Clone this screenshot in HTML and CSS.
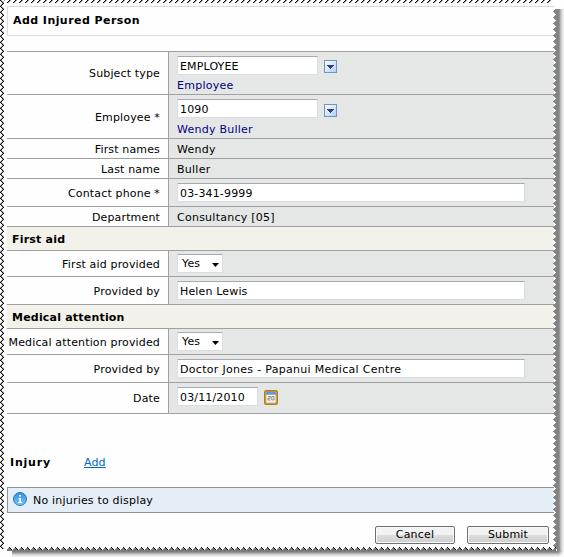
FILE: index.html
```html
<!DOCTYPE html>
<html lang="en">
<head>
<meta charset="utf-8">
<title>Add Injured Person</title>
<link rel="stylesheet" href="styles.css">
</head>
<body>
<main class="page">
  <header class="title"><h1>Add Injured Person</h1></header>
  <section class="form">
    <div class="row h-type"><label class="label">Subject type</label><div class="value stack">
      <div class="line"><input class="field code" value="EMPLOYEE"><svg class="drop" viewBox="0 0 13 13"><use href="#drop"/></svg></div><span class="hint">Employee</span></div></div>
    <div class="row h-emp"><label class="label">Employee *</label><div class="value stack">
      <div class="line"><input class="field code" value="1090"><svg class="drop low" viewBox="0 0 13 13"><use href="#drop"/></svg></div><span class="hint lower">Wendy Buller</span></div></div>
    <div class="row h-text"><span class="label">First names</span><div class="value">Wendy</div></div>
    <div class="row h-text"><span class="label">Last name</span><div class="value">Buller</div></div>
    <div class="row h-input"><label class="label">Contact phone *</label><div class="value"><input class="field wide" value="03-341-9999"></div></div>
    <div class="row h-text"><span class="label">Department</span><div class="value">Consultancy [05]</div></div>
    <h2 class="group">First aid</h2>
    <div class="row h-select"><label class="label">First aid provided</label><div class="value"><div class="field select">Yes<svg viewBox="0 0 7 4" class="caret"><path d="M0 0h7L3.5 4z"/></svg></div></div></div>
    <div class="row h-input"><label class="label">Provided by</label><div class="value"><input class="field wide" value="Helen Lewis"></div></div>
    <h2 class="group">Medical attention</h2>
    <div class="row h-select"><label class="label">Medical attention provided</label><div class="value"><div class="field select">Yes<svg viewBox="0 0 7 4" class="caret"><path d="M0 0h7L3.5 4z"/></svg></div></div></div>
    <div class="row h-input"><label class="label">Provided by</label><div class="value"><input class="field wide spaced" value="Doctor Jones - Papanui Medical Centre"></div></div>
    <div class="row h-date"><label class="label">Date</label><div class="value"><input class="field date" value="03/11/2010">
      <svg class="calendar" viewBox="0 0 14 15"><rect x=".75" y=".75" width="12.5" height="13.5" rx="1.5" fill="#f1c65b" stroke="#b57a10" stroke-width="1.5"/><rect x="2" y="2" width="10" height="11" rx="1" fill="#f6f4ec" stroke="#aaa08a" stroke-width=".7"/><path d="M3 1.8h8l1 2.7H2z" fill="#2d72c8"/><path d="M3.5 3h7" stroke="#b9dcff" stroke-width=".8"/><path d="M4 6.5h2.3v1.7H4v1.8h2.5M7.8 6.5H10V10H7.8z" fill="none" stroke="#777" stroke-width=".8"/></svg></div></div>
  </section>
  <section class="injury"><h2>Injury</h2><a href="#">Add</a></section>
  <div class="notice">
    <svg class="info" viewBox="0 0 14 14"><defs><linearGradient id="blue" x2="0" y2="1"><stop stop-color="#2f8ee0"/><stop offset="1" stop-color="#7cc8fa"/></linearGradient></defs><circle cx="7" cy="7" r="6.5" fill="url(#blue)" stroke="#2878c4"/><path d="M6 3h2v1.6H6zM5.4 6H8v4h1v1H5.2v-1h1V7h-.8z" fill="#fff"/></svg>
    <span>No injuries to display</span>
  </div>
  <footer class="actions"><button class="cancel">Cancel</button><button class="submit">Submit</button></footer>
</main>
<svg class="torn" width="564" height="557" shape-rendering="crispEdges">
  <defs>
    <symbol id="drop" viewBox="0 0 13 13"><linearGradient id="dg" x2="1" y2="1"><stop stop-color="#fff"/><stop offset="1" stop-color="#a9d0f8"/></linearGradient><rect x=".5" y=".5" width="12" height="12" fill="url(#dg)" stroke="#7193bd"/><path d="M3 5h7v1H9v1H8v1H7v1H6V8H5V7H4V6H3z" fill="#393b86"/></symbol>
    <pattern id="left" width="4" height="6" patternUnits="userSpaceOnUse"><path d="M0 0h1v1H0zM1 1h1v1H1zM2 2h1v1H2zM3 3h1v1H3zM2 4h1v1H2zM1 5h1v1H1z"/><path d="M1 0h1v1H1zM2 1h1v1H2zM3 2h1v1H3zM2 3h1v1H2zM1 4h1v1H1zM0 5h1v1H0z" fill="#000" opacity=".35"/></pattern>
    <pattern id="top" width="6" height="3" patternUnits="userSpaceOnUse"><path d="M3 0h1v1H3zM2 1h1v1H2zM1 2h1v1H1z"/><path d="M4 0h1v1H4zM3 1h1v1H3zM2 2h1v1H2z" opacity=".4"/></pattern>
    <pattern id="right" x="553" y="9" width="4" height="6" patternUnits="userSpaceOnUse"><path d="M0 2h4v1H0zM1 1h3v3H1zM2 0h2v5H2zM3 0h1v6H3z" fill="#858585"/></pattern>
    <pattern id="bottom" x="3" y="547" width="6" height="4" patternUnits="userSpaceOnUse"><path d="M0 0h1v1H0zM0 1h2v1H0zM5 1h1v1H5zM0 2h3v1H0zM4 2h2v1H4zM0 3h6v1H0z" fill="#777"/><path d="M0 0h1v1h1v1h1v1H2V2H1V1H0z"/></pattern>
    <linearGradient id="sr"><stop stop-color="#7d7d7d"/><stop offset=".3" stop-color="#898989"/><stop offset=".6" stop-color="#cecece"/><stop offset="1" stop-color="#f6f6f6"/></linearGradient>
    <linearGradient id="sb" x2="0" y2="1"><stop stop-color="#777"/><stop offset=".3" stop-color="#999"/><stop offset=".6" stop-color="#d5d5d5"/><stop offset="1" stop-color="#f8f8f8"/></linearGradient>
    <radialGradient id="sc" cx="0" cy="0" r="1"><stop stop-color="#777"/><stop offset=".4" stop-color="#999"/><stop offset=".7" stop-color="#d5d5d5"/><stop offset="1" stop-color="#f8f8f8"/></radialGradient>
  </defs>
  <rect width="4" height="549" fill="url(#left)"/>
  <rect x="4" width="549" height="3" fill="url(#top)"/>
  <rect x="553" y="9" width="4" height="540" fill="url(#right)"/>
  <rect x="557" y="9" width="7" height="541" fill="url(#sr)"/>
  <rect x="7" y="547" width="549" height="4" fill="url(#bottom)"/>
  <rect x="12" y="551" width="545" height="6" fill="url(#sb)"/>
  <rect x="557" y="550" width="7" height="7" fill="url(#sc)"/>
</svg>
</body>
</html>
```
FILE: styles.css
```css
* { box-sizing: border-box; }
body {
  margin: 0;
  width: 564px;
  height: 557px;
  overflow: hidden;
  background: #fefefe;
  color: #000;
  font: 11px/14px "DejaVu Sans", Verdana, sans-serif;
  letter-spacing: .15px;
}
h1, h2 { margin: 0; font-size: 11px; line-height: 14px; letter-spacing: .2px; }
h1 { letter-spacing: .44px; }
.page { padding: 6px 10px 0 7px; }
.title {
  height: 30px;
  padding: 7px 5px;
  border: 1px solid #dcdcdc;
  border-right: 0;
}
.form { margin-top: 15px; border-top: 1px solid #a19f9f; }
.row { display: grid; grid-template-columns: 161px 1fr; border-bottom: 1px solid #a19f9f; }
.label {
  display: flex;
  align-items: center;
  justify-content: flex-end;
  padding: 2px 8px 0 0;
  white-space: nowrap;
}
.value {
  display: flex;
  align-items: center;
  padding: 0 8px;
  background: #e5e7e6;
  border-left: 1px solid #a19f9f;
  letter-spacing: .25px;
}
.stack { flex-direction: column; align-items: flex-start; padding-top: 4px; gap: 4px; }
.line { display: flex; align-items: flex-start; gap: 6px; height: 19px; }
.hint { color: #000080; }
.lower { padding-top: 1px; }
.h-type { height: 43px; }
.h-emp { height: 44px; }
.h-text { height: 20px; }
.h-text .value { padding-top: 2px; }
.h-input { height: 28px; }
.h-input .value { align-items: flex-start; padding-top: 4px; }
.h-select { height: 26px; }
.h-date { height: 31px; }
.h-date .value { align-items: flex-start; padding-top: 4px; }
.group {
  height: 24px;
  padding: 6px 5px 3px;
  background: #f3f2ea;
  border-bottom: 1px solid #a19f9f;
}
.field {
  height: 19px;
  margin: 0;
  padding: 1px 2px 0;
  border: 1px solid #d8dce4;
  border-top-color: #a8a9af;
  border-radius: 1px;
  background: #fff;
  color: #000;
  font: inherit;
  letter-spacing: .15px;
}
.code { width: 141px; }
.wide { width: 348px; }
.spaced { letter-spacing: .3px; }
.date { width: 81px; }
.select { display: flex; align-items: center; width: 46px; padding: 1px 3px 0 4px; }
.caret { width: 7px; height: 4px; margin-left: auto; margin-top: 2px; }
.drop { width: 13px; height: 13px; margin-top: 4px; }
.drop.low { margin-top: 5px; }
.calendar { width: 14px; height: 15px; margin: 3px 0 0 6px; }
.injury { display: flex; margin-top: 42px; padding-left: 3px; height: 31px; }
.injury h2 { width: 74px; letter-spacing: .8px; }
.injury a { color: #0066cc; }
.notice {
  display: flex;
  align-items: center;
  gap: 6px;
  height: 26px;
  padding-left: 5px;
  border: 1px solid #929292;
  border-right: 0;
  background: #e5edf7;
}
.notice span { padding-top: 2px; letter-spacing: .2px; }
.info { width: 14px; height: 14px; margin-top: -2px; }
.actions { display: flex; justify-content: flex-end; gap: 12px; padding: 13px 5px 0 0; }
button {
  height: 18px;
  padding: 0;
  border: 1px solid #707070;
  border-radius: 2px;
  background: linear-gradient(#f2f2f2 0 48%, #dddddd 50%, #cfcfcf);
  box-shadow: inset 0 0 0 1px #fafafa;
  color: #000;
  font: inherit;
  letter-spacing: .2px;
}
.cancel { width: 80px; }
.submit { width: 82px; }
.torn { position: absolute; left: 0; top: 0; pointer-events: none; }
```
